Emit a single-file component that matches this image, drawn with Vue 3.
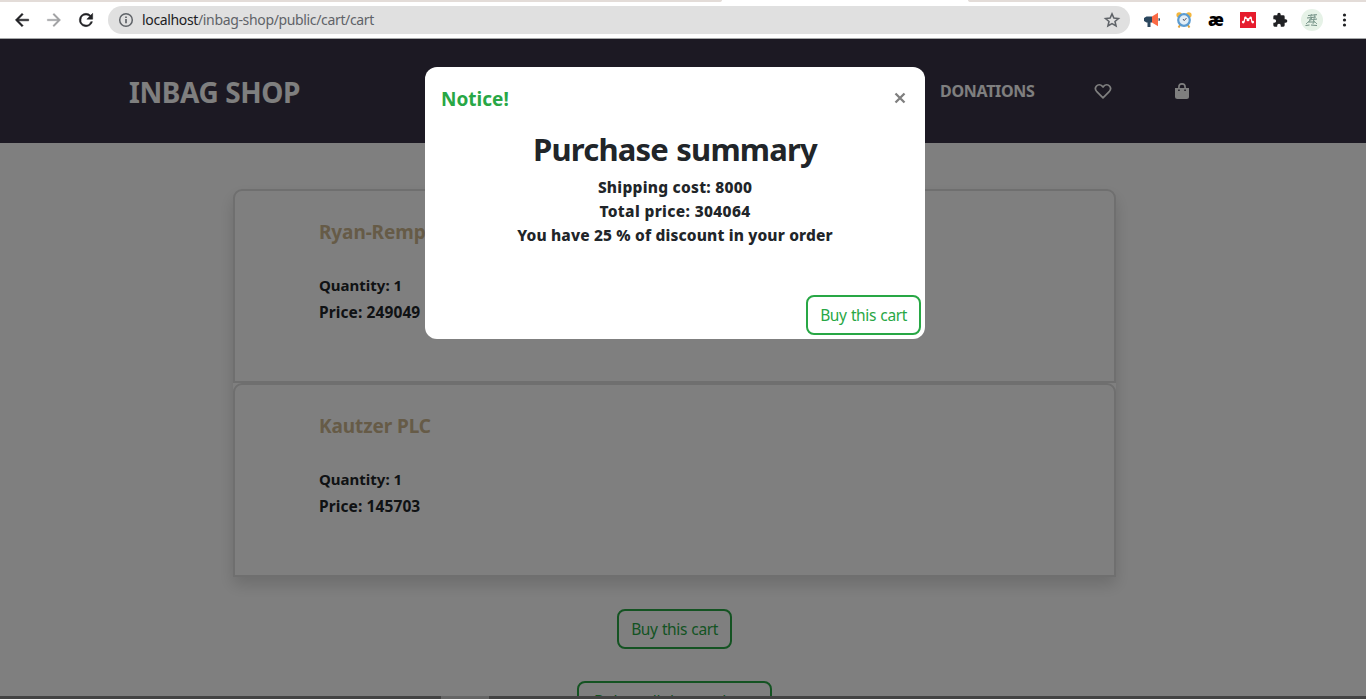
<script setup>
const products = [
  { name: 'Ryan-Rempel', quantity: 1, price: 249049 },
  { name: 'Kautzer PLC', quantity: 1, price: 145703 },
]
</script>

<template>
  <div class="window">
    <div class="browser">
      <div class="tabs"><i class="tab-left"></i><i class="tab-right"></i></div>
      <div class="toolbar">
        <svg class="nav" viewBox="0 0 24 24"><path d="M20 11H7.8l5.6-5.6L12 4l-8 8 8 8 1.4-1.4L7.8 13H20z" fill="#202124" stroke="#202124" stroke-width=".6" /></svg>
        <svg class="nav" viewBox="0 0 24 24"><path d="M4 11h12.2l-5.6-5.6L12 4l8 8-8 8-1.4-1.4 5.6-5.6H4z" fill="#a0a1a3" stroke="#a0a1a3" stroke-width=".4" /></svg>
        <svg class="nav" viewBox="0 0 24 24"><path d="M17.65 6.35A7.96 7.96 0 0 0 12 4a8 8 0 1 0 7.73 10h-2.08A6 6 0 1 1 12 6c1.66 0 3.14.69 4.22 1.78L13 11h7V4z" fill="#202124" stroke="#202124" stroke-width=".6" /></svg>
        <div class="omnibox">
          <svg class="info" viewBox="0 0 16 16"><circle cx="8" cy="8" r="6.3" fill="none" stroke="#5f6368" stroke-width="1.5" /><path d="M8 7v4.300M8 4.500v1.600" stroke="#5f6368" stroke-width="1.700" /></svg>
          <span class="url"><b>localhost</b>/inbag-shop/public/cart/cart</span>
          <svg class="star" viewBox="0 0 24 24"><path d="M12 3.800l2.500 5.600 6.100.6-4.600 4 1.400 6L12 16.900 6.600 20l1.400-6-4.600-4 6.100-.6z" fill="none" stroke="#5f6368" stroke-width="2.100" /></svg>
        </div>
        <div class="extensions">
          <svg class="ext" viewBox="0 0 16 16"><path d="M2.500 4.500H8v6H6.500V15H3.500v-4.500h-1L0 9V6z" fill="#2b475e" /><path d="M8 4.500L14 .8v13.400l-6-3.700z" fill="#fa6a45" /><path d="M14.500 6l1.500.5v2l-1.500.5z" fill="#2b475e" /></svg>
          <svg class="ext" viewBox="0 0 16 16"><circle cx="3.200" cy="3" r="2.800" fill="#f4b63d" /><circle cx="12.800" cy="3" r="2.800" fill="#f4b63d" /><path d="M2.500 15.500l2-3M13.500 15.500l-2-3" stroke="#e2a33a" stroke-width="2" /><circle cx="8" cy="8" r="5.800" fill="#e3eef6" stroke="#5b9bd0" stroke-width="2.200" /><path d="M7 7l1.200 1.700L10.500 6" fill="none" stroke="#556" /></svg>
          <span class="ae">æ</span>
          <svg class="ext" viewBox="0 0 16 16"><path d="M0 0h16v16H0z" fill="#e61c2d" /><path d="M3.400 10.300c1.600-.6.500-3 1.700-4.300M12.600 10.300c-1.600-.6-.5-3-1.700-4.300" fill="none" stroke="#fff" stroke-width="1.200" /><path d="M5.200 5.700L8 7.200l2.800-1.500" fill="none" stroke="#fff" stroke-width="1.100" /><g fill="#fff"><circle cx="5.400" cy="5.800" r="1.200" /><circle cx="10.600" cy="5.800" r="1.200" /><circle cx="8" cy="7.700" r="1.500" /><circle cx="3.200" cy="10.100" r="1.300" /><circle cx="12.800" cy="10.100" r="1.300" /></g></svg>
          <svg class="ext" viewBox="0 0 24 24"><path d="M20.500 11H19V7a2 2 0 0 0-2-2h-4V3.500a2.500 2.500 0 0 0-5 0V5H4a2 2 0 0 0-2 2v3.800h1.500a2.700 2.700 0 0 1 0 5.400H2V20a2 2 0 0 0 2 2h3.800v-1.500a2.700 2.700 0 0 1 5.400 0V22H17a2 2 0 0 0 2-2v-4h1.500a2.500 2.500 0 0 0 0-5z" fill="#202124" /></svg>
          <svg class="avatar" viewBox="0 0 22 22"><circle cx="11" cy="11" r="11" fill="#e6f2e7" /><g fill="none" stroke="#6f8c81"><path d="M7 6.500l9-.8M6 9l9-1M8 11l8-1M7 13h7M4.500 16.500l4-.5M10 16l6 .5" /><path d="M10.500 5l-2 8M14 5l-2 10M9 8l7 7M5 15l4-4" stroke="#87a397" /></g></svg>
          <svg class="dots" viewBox="0 0 16 16"><g fill="#202124"><circle cx="8.500" cy="3" r="1.600" /><circle cx="8.500" cy="8" r="1.600" /><circle cx="8.500" cy="13" r="1.600" /></g></svg>
        </div>
      </div>
    </div>

    <div class="page">
      <header class="site-header">
        <div class="brand">INBAG SHOP</div>
        <nav class="links">
          <span class="donations">DONATIONS</span>
          <svg class="heart" viewBox="0 0 16 16"><path d="M8 14L2.200 8.200C.8 6.700.5 4.500 1.700 3 3.200 1.200 5.800 1.200 7.200 2.900L8 3.800l.8-.9C10.200 1.200 12.800 1.200 14.300 3c1.200 1.500.9 3.700-.5 5.200z" fill="none" stroke="#fff" stroke-width="1.600" stroke-linejoin="round" /></svg>
          <svg class="bag" viewBox="0 0 14 16"><path d="M0 5h14v8.500A2.500 2.500 0 0 1 11.500 16h-9A2.500 2.500 0 0 1 0 13.500z" fill="#fff" /><path d="M3.900 7.300V4a3.100 3.100 0 0 1 6.200 0v3.300" fill="none" stroke="#fff" stroke-width="1.600" /><path d="M3.200 6.500h1.500V8H3.200zM9.300 6.500h1.500V8H9.300z" fill="#383346" /></svg>
        </nav>
      </header>

      <main class="cart">
        <section class="items">
          <article v-for="p in products" :key="p.name" class="item">
            <h2>{{ p.name }}</h2>
            <p class="qty">Quantity: {{ p.quantity }}</p>
            <p class="price">Price: {{ p.price }}</p>
          </article>
        </section>
        <button class="btn">Buy this cart</button>
        <button class="btn wide">Delete all the products</button>
      </main>

      <div class="backdrop"></div>
      <div class="modal">
        <div class="modal-head">
          <h5>Notice!</h5>
          <svg class="close" viewBox="0 0 12 12"><path d="M1.500 1.500l9 9M10.500 1.500l-9 9" stroke="#7f7f7f" stroke-width="2.300" /></svg>
        </div>
        <div class="modal-body">
          <h1>Purchase summary</h1>
          <p class="cost">Shipping cost: 8000</p>
          <p class="total">Total price: 304064</p>
          <p class="discount">You have 25 % of discount in your order</p>
        </div>
        <div class="modal-foot"><button class="btn">Buy this cart</button></div>
      </div>
    </div>
    <div class="taskbar"><i></i></div>
  </div>
</template>

<style>
body { overflow: hidden; }
</style>

<style scoped>
* { box-sizing: border-box; }
.window { position: relative; width: 1366px; height: 699px; overflow: hidden; display: flex; flex-direction: column; font-family: "Noto Sans", "Open Sans", sans-serif; color: #212529; }
h1, h2, h5, p { margin: 0; white-space: nowrap; }

.browser { height: 39px; background: #fff; border-bottom: 1px solid #a5a7a8; flex: none; }
.tabs { height: 2px; display: flex; justify-content: space-between; }
.tabs i { background: #e3dcd8; }
.tab-left { width: 722px; border-bottom-right-radius: 3px 2px; }
.tab-right { width: 398px; border-bottom-left-radius: 3px 2px; }
.toolbar { height: 36px; display: flex; align-items: center; padding-left: 12px; }
.nav { width: 20px; height: 20px; margin-right: 12px; flex: none; }
.omnibox { width: 1022px; height: 28px; border-radius: 14px; background: #e0e0e0; display: flex; align-items: center; padding: 0 9px 0 10px; flex: none; }
.info { width: 16px; height: 16px; margin-right: 8px; }
.url { font-size: 14px; line-height: 20px; color: #5f6368; letter-spacing: -0.35px; flex: 1; }
.url b { font-weight: 400; color: #202124; }
.star { width: 18px; height: 18px; }
.extensions { display: flex; align-items: center; margin-left: 14px; gap: 16px; }
.ext { width: 16px; height: 16px; }
.ae { width: 16px; height: 20px; font: 800 17px/19px "Open Sans", sans-serif; color: #000; display: flex; justify-content: center; }
.avatar { width: 22px; height: 22px; margin: 0 -3px; }
.dots { width: 16px; height: 16px; }

.page { position: relative; flex: 1; background: #fff; overflow: hidden; }
.site-header { height: 104px; background: #383346; color: #fff; display: flex; justify-content: space-between; padding: 0 177px 0 129px; align-items: center; font-weight: 700; }
.brand { font-size: 28px; letter-spacing: -0.4px; line-height: 40px; padding-top: 1px; white-space: nowrap; }
.links { display: flex; align-items: center; }
.donations { font-size: 16px; letter-spacing: -0.3px; width: 154px; }
.heart { width: 18px; height: 17px; margin-right: 63px; }
.bag { width: 14px; height: 16px; }

.cart { display: flex; flex-direction: column; align-items: center; padding: 46px 17px 0 0; }
.items { width: 883px; margin-bottom: 32px; border-radius: 9px 9px 0 0; box-shadow: 0 8px 16px rgba(0, 0, 0, 0.15); }
.item { height: 194px; border: 2px solid #dedede; border-radius: 9px 9px 0 0; padding: 26px 84px; font-weight: 700; font-size: 16px; }
.item h2 { font-size: 19px; line-height: 30px; color: #ccb68e; letter-spacing: -0.1px; margin-bottom: 25px; }
.item p { line-height: 27px; font-size: 15px; }
.item .price { font-size: 15.5px; letter-spacing: 0.1px; }
.btn { width: 115px; height: 40px; flex: none; padding: 0; border: 2px solid #28a745; border-radius: 8px; background: transparent; color: #28a745; font: 400 15.5px/24px "Noto Sans", "Open Sans", sans-serif; letter-spacing: -0.4px; word-spacing: 0.8px; white-space: nowrap; }
.wide { width: 195px; margin-top: 32px; letter-spacing: -0.25px; }

.backdrop { position: absolute; inset: 0; background: rgba(0, 0, 0, 0.5); }
.modal { position: absolute; left: 425px; top: 28px; width: 500px; height: 272px; background: #fff; border-radius: 12px; display: flex; flex-direction: column; }
.modal-head { height: 64px; padding: 0 19px 0 16px; display: flex; justify-content: space-between; align-items: center; }
.modal-head h5 { font-size: 19px; line-height: 28px; color: #28a745; }
.close { width: 12px; height: 12px; margin-top: -2px; }
.modal-body { flex: 1; text-align: center; }
h1 { font-size: 31px; line-height: 36px; letter-spacing: -0.8px; word-spacing: 1px; margin-bottom: 8px; }
.modal-body p { font-size: 15.5px; line-height: 24px; font-weight: 800; }
.modal-body .cost { letter-spacing: 0.25px; }
.modal-body .total { letter-spacing: 0.35px; }
.modal-body .discount { letter-spacing: 0.15px; }
.modal-foot { display: flex; justify-content: flex-end; padding: 0 4px 4px 0; }

.taskbar { position: absolute; left: 0; right: 0; bottom: 0; height: 3px; background: #434343; }
.taskbar i { display: block; width: 48px; height: 3px; margin-left: 441px; background: #656565; }
</style>
